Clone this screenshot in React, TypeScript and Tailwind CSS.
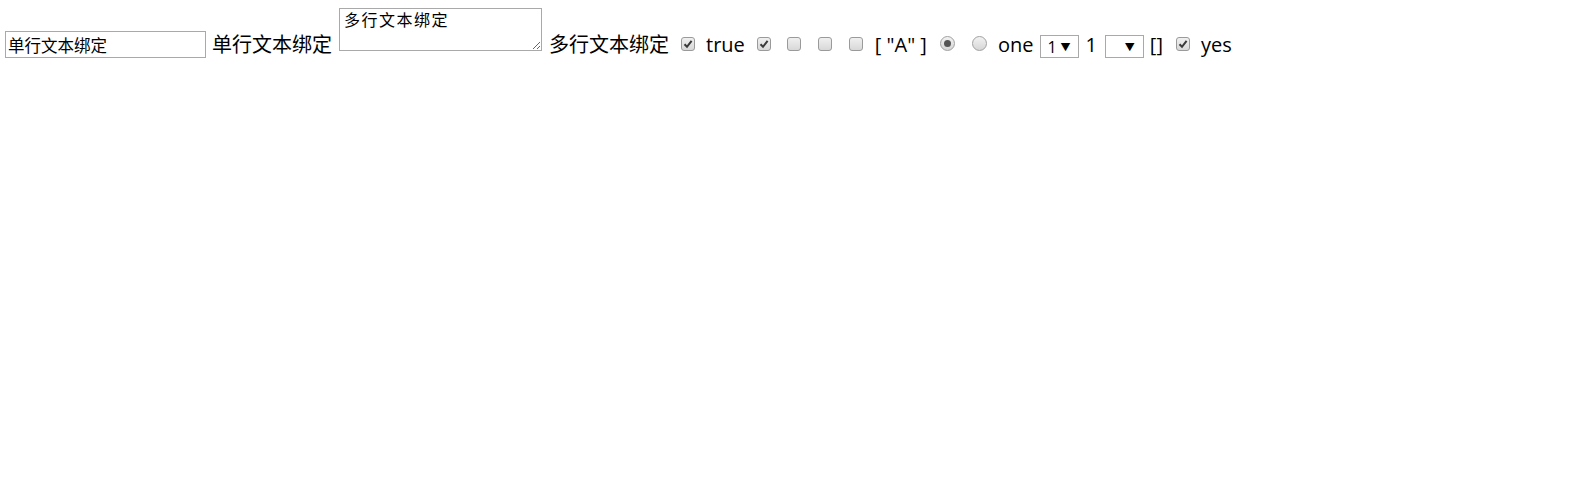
import React from "react";

const font = "font-['Open_Sans','Noto_Sans_CJK_SC',sans-serif]";

function Box({ checked }: { checked?: boolean }) {
    return (
        <span className="inline-flex h-[14px] w-[14px] items-center justify-center rounded-[3px] border border-[#9a9a9a] bg-gradient-to-b from-[#f0f0f0] to-[#d8d8d8]">
            {checked && (
                <svg width="10" height="10" viewBox="0 0 10 10">
                    <path d="M1.5 5.2 L4 7.8 L8.6 1.8" stroke="#3a3a3a" strokeWidth="2" fill="none" />
                </svg>
            )}
        </span>
    );
}

function Radio({ checked }: { checked?: boolean }) {
    return (
        <span className="inline-flex h-[15px] w-[15px] items-center justify-center rounded-full border border-[#a0a0a0] bg-gradient-to-b from-[#f2f2f2] to-[#d6d6d6]">
            {checked && <span className="h-[7px] w-[7px] rounded-full bg-[#555]" />}
        </span>
    );
}

function Select({ value }: { value?: string }) {
    return (
        <span className="flex h-[23px] w-[39px] items-center justify-between border border-[#a9a9a9] bg-white pl-[6px] pr-[8px] text-[16px] leading-none">
            <span>{value}</span>
            <span className="text-[10px]">▼</span>
        </span>
    );
}

export default function App() {
    return (
        <div className={`${font} flex h-[498px] w-full items-start bg-white pt-[8px] pl-[5px] text-[20px] text-black`}>
            <input
                defaultValue="单行文本绑定"
                className="mt-[23px] h-[27px] w-[201px] border border-[#a9a9a9] px-[2px] text-[16.5px] outline-none"
            />
            <span className="ml-[6px] mt-[24px] leading-[26px]">单行文本绑定</span>
            <textarea
                defaultValue="多行文本绑定"
                className="ml-[7px] h-[43px] w-[203px] border border-[#a9a9a9] px-[4px] py-[1px] text-[16px] leading-[20px] tracking-[1.5px] outline-none"
            />
            <span className="ml-[7px] mt-[24px] leading-[26px]">多行文本绑定</span>
            <span className="ml-[12px] mt-[29px] flex"><Box checked /></span>
            <span className="ml-[11px] mt-[24px] leading-[26px]">true</span>
            <span className="ml-[12px] mt-[29px] flex"><Box checked /></span>
            <span className="ml-[16px] mt-[29px] flex"><Box /></span>
            <span className="ml-[17px] mt-[29px] flex"><Box /></span>
            <span className="ml-[17px] mt-[29px] flex"><Box /></span>
            <span className="ml-[12px] mt-[24px] leading-[26px] whitespace-pre">[ "A" ]</span>
            <span className="ml-[13px] mt-[28px] flex"><Radio checked /></span>
            <span className="ml-[17px] mt-[28px] flex"><Radio /></span>
            <span className="ml-[11px] mt-[24px] leading-[26px]">one</span>
            <span className="ml-[7px] mt-[27px] flex"><Select value="1" /></span>
            <span className="ml-[6px] mt-[24px] leading-[26px]">1</span>
            <span className="ml-[8px] mt-[27px] flex"><Select /></span>
            <span className="ml-[6px] mt-[24px] leading-[26px]">[]</span>
            <span className="ml-[13px] mt-[29px] flex"><Box checked /></span>
            <span className="ml-[11px] mt-[24px] leading-[26px]">yes</span>
        </div>
    );
}
